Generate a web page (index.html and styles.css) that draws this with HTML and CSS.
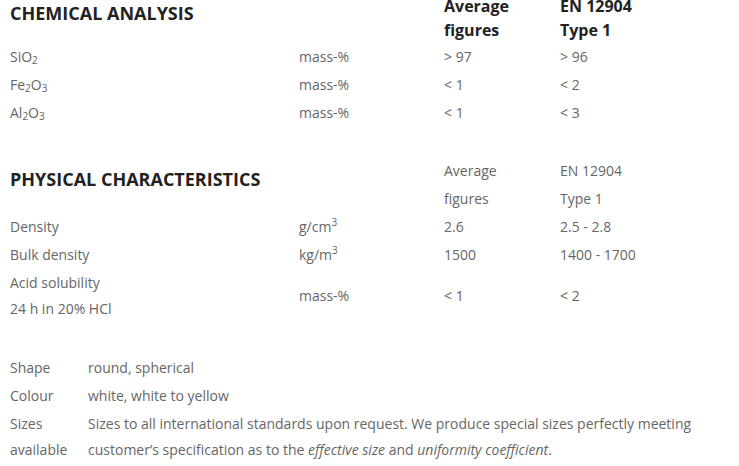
FILE: index.html
```html
<!DOCTYPE html>
<html>
<head>
<meta charset="utf-8">
<link rel="stylesheet" href="styles.css">
</head>
<body>
<div class="page">
  <table class="spec chem">
    <colgroup><col class="c1"><col class="c2"><col class="c3"><col class="c4"></colgroup>
    <tr class="head">
      <td><h2>CHEMICAL ANALYSIS</h2></td>
      <td></td>
      <td class="bold">Average<br>figures</td>
      <td class="bold">EN 12904<br>Type 1</td>
    </tr>
    <tr><td>SiO<sub>2</sub></td><td>mass-%</td><td>&gt; 97</td><td>&gt; 96</td></tr>
    <tr><td>Fe<sub>2</sub>O<sub>3</sub></td><td>mass-%</td><td>&lt; 1</td><td>&lt; 2</td></tr>
    <tr><td>Al<sub>2</sub>O<sub>3</sub></td><td>mass-%</td><td>&lt; 1</td><td>&lt; 3</td></tr>
  </table>

  <table class="spec phys">
    <colgroup><col class="c1"><col class="c2"><col class="c3"><col class="c4"></colgroup>
    <tr>
      <td rowspan="2" class="hcell"><h2>PHYSICAL CHARACTERISTICS</h2></td>
      <td rowspan="2"></td>
      <td>Average</td>
      <td>EN 12904</td>
    </tr>
    <tr><td>figures</td><td>Type 1</td></tr>
    <tr><td>Density</td><td>g/cm<sup>3</sup></td><td>2.6</td><td>2.5 - 2.8</td></tr>
    <tr><td>Bulk density</td><td>kg/m<sup>3</sup></td><td>1500</td><td>1400 - 1700</td></tr>
    <tr><td>Acid solubility<br>24 h in 20% HCl</td><td>mass-%</td><td>&lt; 1</td><td>&lt; 2</td></tr>
  </table>

  <table class="props">
    <tr><td class="lbl">Shape</td><td>round, spherical</td></tr>
    <tr><td class="lbl">Colour</td><td>white, white to yellow</td></tr>
    <tr><td class="lbl">Sizes<br>available</td><td>Sizes to all international standards upon request. We produce special sizes perfectly meeting<br>customer’s specification as to the <em>effective size</em> and <em>uniformity coefficient</em>.</td></tr>
  </table>
</div>
</body>
</html>
```

FILE: styles.css
```css
html, body {
  margin: 0;
  padding: 0;
  background: #ffffff;
}
body {
  font-family: "Open Sans", "Liberation Sans", sans-serif;
  font-size: 14px;
  color: #666666;
}
.page {
  padding-left: 10px;
  margin-top: -6px;
}
table {
  border-collapse: collapse;
  table-layout: fixed;
}
td {
  padding: 1px 0;
  line-height: 26px;
  vertical-align: middle;
  text-align: left;
}
.spec {
  width: 729px;
}
.c1 { width: 289px; }
.c2 { width: 145px; }
.c3 { width: 116px; }
.c4 { width: 179px; }
h2 {
  margin: 0 0 12px;
  font-size: 18px;
  line-height: 20px;
  font-weight: 700;
  color: #222222;
}
.head td {
  line-height: 23.5px;
}
.bold {
  font-weight: 700;
  font-size: 16px;
  color: #222222;
}
sub, sup {
  font-size: 10px;
  line-height: 0;
}
sub { vertical-align: -2px; }
sup { vertical-align: 6px; }
.phys {
  margin-top: 30px;
}
.props {
  margin-top: 31px;
}
.props .lbl {
  width: 78px;
  vertical-align: top;
}
em {
  font-style: italic;
}
```
